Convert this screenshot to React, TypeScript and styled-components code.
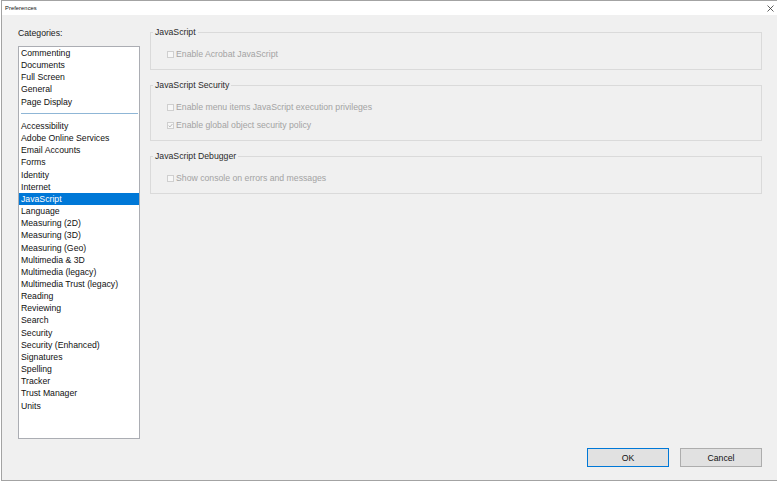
import styled, { createGlobalStyle } from 'styled-components'

const GlobalStyle = createGlobalStyle`
    html, body {
        margin: 0;
        padding: 0;
        background: #ffffff;
    }
    body {
        font-family: "Liberation Sans", Arial, sans-serif;
        font-size: 8.7px;
        color: #000;
    }
`

const Window = styled.div`
    margin-left: 1px;
    width: 776px;
    box-sizing: border-box;
    border-top: 1px solid #a3a3a3;
    border-left: 1px solid #a3a3a3;
    border-bottom: 1px solid #a3a3a3;
    background: #f0f0f0;
`

const TitleBar = styled.div`
    height: 14px;
    background: #ffffff;
    display: flex;
    align-items: center;
    justify-content: space-between;
    padding: 0 3px 0 3px;
`

const TitleText = styled.span`
    font-size: 5.8px;
    line-height: 14px;
    color: #111;
    letter-spacing: 0.05px;
`

const Body = styled.div`
    height: 465px;
    box-sizing: border-box;
    padding: 11px 15px 13px 16px;
    display: flex;
    flex-direction: column;
`

const Main = styled.div`
    display: flex;
    gap: 10px;
`

const LeftColumn = styled.div`
    width: 122px;
    display: flex;
    flex-direction: column;
`

const Label = styled.div`
    line-height: 12px;
    padding-top: 1px;
    margin-bottom: 7px;
    color: #1a1a1a;
`

const List = styled.div`
    height: 393px;
    box-sizing: border-box;
    border: 1px solid #abadb3;
    background: #ffffff;
    overflow: hidden;
`

const Item = styled.div<{ $selected?: boolean }>`
    height: 12.17px;
    box-sizing: border-box;
    padding: 1px 0 0 2px;
    line-height: 11.17px;
    white-space: nowrap;
    color: ${p => (p.$selected ? '#ffffff' : '#111111')};
    background: ${p => (p.$selected ? '#0078d7' : 'transparent')};
`

const Divider = styled.div`
    height: 12.17px;
    display: flex;
    align-items: center;
    padding: 0 1px 0 2px;

    &::after {
        content: '';
        flex: 1;
        height: 1px;
        background: #8fb6d6;
    }
`

const RightColumn = styled.div`
    width: 612px;
    display: flex;
    flex-direction: column;
    gap: 9px;
`

const Group = styled.fieldset`
    margin: 0;
    padding: 0;
    min-width: 0;
    border: 1px solid #dadada;
`

const Legend = styled.legend`
    padding: 1px 2px 0;
    margin-left: 2px;
    line-height: 11px;
    color: #2b2b2b;
`

const Rows = styled.div`
    display: flex;
    flex-direction: column;
    gap: 4px;
    padding: 9px 0 8px 16px;
`

const Row = styled.div`
    height: 14px;
    display: flex;
    align-items: center;
    gap: 2px;
    color: #a3a3a3;
`

const Box = styled.span`
    width: 7px;
    height: 7px;
    box-sizing: border-box;
    border: 1px solid #cfcfcf;
    background: #f7f7f7;
    display: inline-flex;
    align-items: center;
    justify-content: center;
`

const Footer = styled.div`
    margin-top: auto;
    display: flex;
    justify-content: flex-end;
    gap: 11px;
`

const Button = styled.button<{ $default?: boolean }>`
    width: 82px;
    height: 19px;
    box-sizing: border-box;
    margin: 0;
    padding: 0;
    font-family: "Liberation Sans", Arial, sans-serif;
    font-size: 8.7px;
    color: #111;
    background: #e1e1e1;
    border: 1px solid ${p => (p.$default ? '#0078d7' : '#adadad')};
`

const categoriesTop = ['Commenting', 'Documents', 'Full Screen', 'General', 'Page Display']

const categories = [
    'Accessibility',
    'Adobe Online Services',
    'Email Accounts',
    'Forms',
    'Identity',
    'Internet',
    'JavaScript',
    'Language',
    'Measuring (2D)',
    'Measuring (3D)',
    'Measuring (Geo)',
    'Multimedia & 3D',
    'Multimedia (legacy)',
    'Multimedia Trust (legacy)',
    'Reading',
    'Reviewing',
    'Search',
    'Security',
    'Security (Enhanced)',
    'Signatures',
    'Spelling',
    'Tracker',
    'Trust Manager',
    'Units',
]

const groups = [
    { title: 'JavaScript', options: [{ label: 'Enable Acrobat JavaScript', checked: false }] },
    {
        title: 'JavaScript Security',
        options: [
            { label: 'Enable menu items JavaScript execution privileges', checked: false },
            { label: 'Enable global object security policy', checked: true },
        ],
    },
    { title: 'JavaScript Debugger', options: [{ label: 'Show console on errors and messages', checked: false }] },
]

const CloseIcon = () => (
    <svg width="7" height="7" viewBox="0 0 7 7">
        <path d="M0.5 0.5 L6.5 6.5 M6.5 0.5 L0.5 6.5" stroke="#333" strokeWidth="0.8" />
    </svg>
)

const Check = () => (
    <svg width="5" height="5" viewBox="0 0 5 5">
        <path d="M0.6 2.6 L2 3.9 L4.4 1" stroke="#a8a8a8" strokeWidth="0.8" fill="none" />
    </svg>
)

const App = () => {
    return (
        <>
            <GlobalStyle />
            <Window>
                <TitleBar>
                    <TitleText>Preferences</TitleText>
                    <CloseIcon />
                </TitleBar>
                <Body>
                    <Main>
                        <LeftColumn>
                            <Label>Categories:</Label>
                            <List>
                                {categoriesTop.map(c => <Item key={c}>{c}</Item>)}
                                <Divider />
                                {categories.map(c => (
                                    <Item key={c} $selected={c === 'JavaScript'}>{c}</Item>
                                ))}
                            </List>
                        </LeftColumn>
                        <RightColumn>
                            {groups.map(g => (
                                <Group key={g.title}>
                                    <Legend>{g.title}</Legend>
                                    <Rows>
                                        {g.options.map(o => (
                                            <Row key={o.label}>
                                                <Box>{o.checked && <Check />}</Box>
                                                {o.label}
                                            </Row>
                                        ))}
                                    </Rows>
                                </Group>
                            ))}
                        </RightColumn>
                    </Main>
                    <Footer>
                        <Button $default>OK</Button>
                        <Button>Cancel</Button>
                    </Footer>
                </Body>
            </Window>
        </>
    )
}

export default App
